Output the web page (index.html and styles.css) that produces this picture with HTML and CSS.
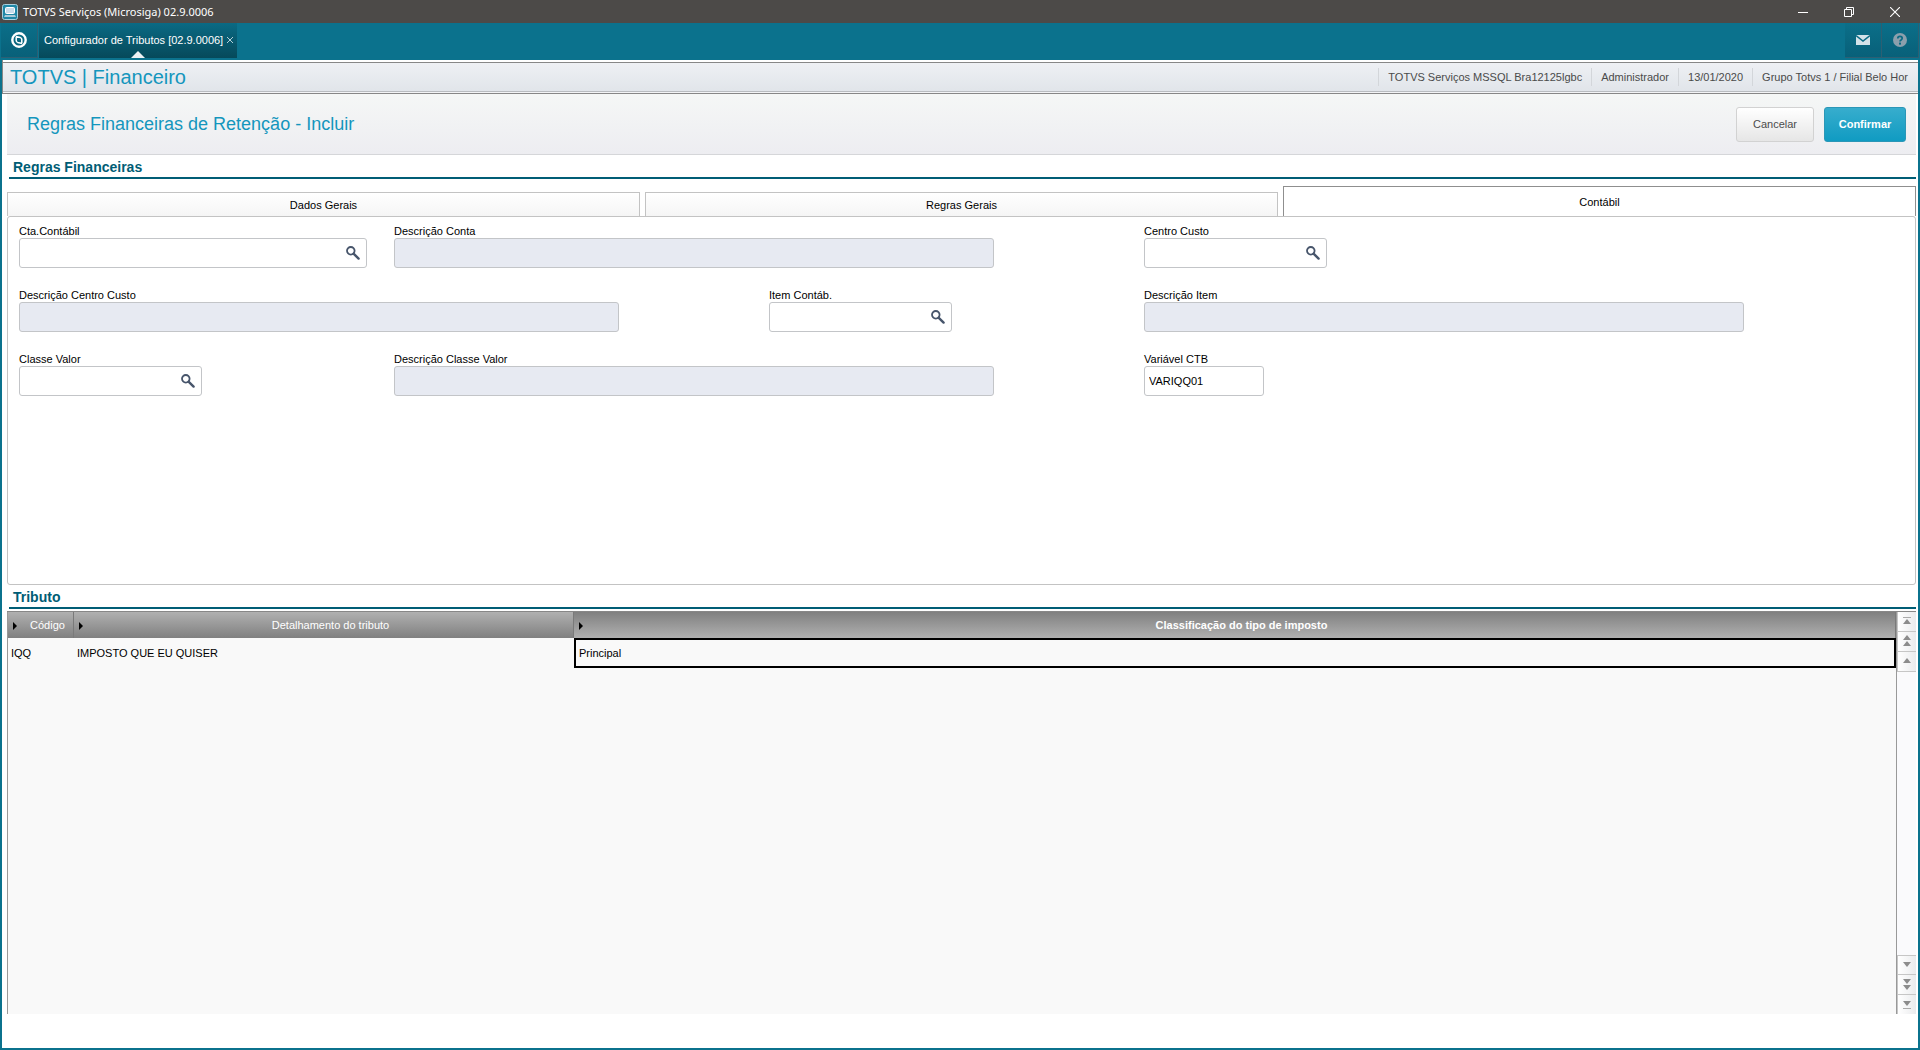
FILE: index.html
```html
<!DOCTYPE html>
<html lang="pt-BR">

<head>
  <meta charset="UTF-8">
  <meta name="viewport" content="width=device-width, initial-scale=1.0">
  <title>TOTVS Serviços (Microsiga) 02.9.0006</title>
  <link rel="stylesheet" href="styles.css">
</head>

<body>
  <svg class="sprite" aria-hidden="true">
    <symbol id="lupa" viewBox="0 0 14 14">
      <circle cx="4.8" cy="4.8" r="3.8" fill="none" stroke="#47556b" stroke-width="1.8"/>
      <path d="M7.8 7.8L12.6 12.6" stroke="#47556b" stroke-width="2.4" stroke-linecap="round"/>
    </symbol>
  </svg>

  <!-- barra da janela -->
  <header class="titlebar">
    <svg class="app-icon" width="16" height="16" viewBox="0 0 16 16">
      <rect x="0.5" y="0.5" width="15" height="15" rx="2" fill="#1f87a6" stroke="#a9cfdc"/>
      <rect x="3.5" y="3.5" width="9" height="6" rx="1" fill="#c9dcea" stroke="#fff"/>
      <path d="M3 11h10l1 2H2z" fill="#a9cbd8"/>
    </svg>
    <span class="window-title">TOTVS Serviços (Microsiga) 02.9.0006</span>
    <div class="window-buttons">
      <button type="button" aria-label="Minimizar"><svg width="10" height="10"><path d="M0 5.5H10" stroke="#fff"/></svg></button>
      <button type="button" aria-label="Restaurar"><svg width="10" height="10"><path d="M0.5 2.5h7v7h-7zM2.5 2.5v-2h7v7h-2" fill="none" stroke="#fff"/></svg></button>
      <button type="button" aria-label="Fechar"><svg width="10" height="10"><path d="M0 0L10 10M10 0L0 10" stroke="#fff" stroke-width="1.1"/></svg></button>
    </div>
  </header>

  <!-- abas do sistema -->
  <nav class="appbar">
    <button type="button" class="home" aria-label="Início">
      <svg width="16" height="16" viewBox="0 0 16 16">
        <circle cx="8" cy="8" r="6.7" fill="none" stroke="#fff" stroke-width="2.4"/>
        <path d="M4.8 4.6L9.4 5.6Q10.8 6 10.8 7.4V10.9M11.2 11.4L6.6 10.4Q5.2 10 5.2 8.6V5.1" fill="none" stroke="#fff" stroke-width="1.5"/>
      </svg>
    </button>
    <div class="app-tab">
      <a href="#">Configurador de Tributos [02.9.0006]</a>
      <button type="button" class="tab-close" aria-label="Fechar aba"><svg width="6" height="6"><path d="M0 0L6 6M6 0L0 6" stroke="#b5d0d8"/></svg></button>
    </div>
    <div class="app-actions">
      <button type="button" aria-label="Mensagens"><svg width="14" height="10" viewBox="0 0 14 10"><rect width="14" height="10" fill="#d3e2e9"/><path d="M0 0.5L7 6L14 0.5" fill="none" stroke="#0a6a84" stroke-width="1.4"/></svg></button>
      <button type="button" aria-label="Ajuda"><svg width="14" height="14" viewBox="0 0 14 14"><circle cx="7" cy="7" r="7" fill="#8b9fac"/><path d="M4.8 5.4Q4.8 3.4 7 3.4T9.2 5.3Q9.2 6.3 8.1 6.9Q7 7.5 7 8.6" fill="none" stroke="#0a6a84" stroke-width="1.7"/><rect x="6" y="9.6" width="2" height="2" fill="#0a6a84"/></svg></button>
    </div>
  </nav>

  <div class="module-bar">
    <h1>TOTVS | Financeiro</h1>
    <ul class="session">
      <li>TOTVS Serviços MSSQL Bra12125lgbc</li>
      <li>Administrador</li>
      <li>13/01/2020</li>
      <li>Grupo Totvs 1 / Filial Belo Hor</li>
    </ul>
  </div>

  <main>
    <div class="form-header">
      <h2>Regras Financeiras de Retenção - Incluir</h2>
      <div class="form-actions">
        <button type="button" class="btn">Cancelar</button>
        <button type="button" class="btn btn-primary">Confirmar</button>
      </div>
    </div>

    <h3 class="section-title">Regras Financeiras</h3>

    <div class="tabs" role="tablist">
      <button type="button" role="tab">Dados Gerais</button>
      <button type="button" role="tab">Regras Gerais</button>
      <button type="button" role="tab" class="active" aria-selected="true">Contábil</button>
    </div>

    <form class="panel">
      <div class="field">
        <label for="conta">Cta.Contábil</label>
        <div class="box box-md">
          <input type="text" id="conta">
          <button type="button" aria-label="Pesquisar"><svg width="14" height="14"><use href="#lupa"/></svg></button>
        </div>
      </div>
      <div class="field span2">
        <label for="desc-conta">Descrição Conta</label>
        <div class="box box-lg disabled"><input type="text" id="desc-conta" disabled></div>
      </div>
      <div class="field span2">
        <label for="custo">Centro Custo</label>
        <div class="box box-sm">
          <input type="text" id="custo">
          <button type="button" aria-label="Pesquisar"><svg width="14" height="14"><use href="#lupa"/></svg></button>
        </div>
      </div>

      <div class="field span2">
        <label for="desc-custo">Descrição Centro Custo</label>
        <div class="box box-lg disabled"><input type="text" id="desc-custo" disabled></div>
      </div>
      <div class="field">
        <label for="item">Item Contáb.</label>
        <div class="box box-sm">
          <input type="text" id="item">
          <button type="button" aria-label="Pesquisar"><svg width="14" height="14"><use href="#lupa"/></svg></button>
        </div>
      </div>
      <div class="field span2">
        <label for="desc-item">Descrição Item</label>
        <div class="box box-lg disabled"><input type="text" id="desc-item" disabled></div>
      </div>

      <div class="field">
        <label for="classe">Classe Valor</label>
        <div class="box box-sm">
          <input type="text" id="classe">
          <button type="button" aria-label="Pesquisar"><svg width="14" height="14"><use href="#lupa"/></svg></button>
        </div>
      </div>
      <div class="field span2">
        <label for="desc-classe">Descrição Classe Valor</label>
        <div class="box box-lg disabled"><input type="text" id="desc-classe" disabled></div>
      </div>
      <div class="field span2">
        <label for="variavel">Variável CTB</label>
        <div class="box box-xs"><input type="text" id="variavel" value="VARIQQ01"></div>
      </div>
    </form>

    <h3 class="section-title">Tributo</h3>

    <div class="grid">
      <div class="grid-body">
        <table>
          <colgroup>
            <col class="col-codigo">
            <col class="col-detalhe">
            <col>
          </colgroup>
          <thead>
            <tr>
              <th>Código</th>
              <th>Detalhamento do tributo</th>
              <th class="current">Classificação do tipo de imposto</th>
            </tr>
          </thead>
          <tbody>
            <tr>
              <td>IQQ</td>
              <td>IMPOSTO QUE EU QUISER</td>
              <td class="current">Principal</td>
            </tr>
          </tbody>
        </table>
      </div>
      <div class="scroller">
        <button type="button" aria-label="Primeiro"><svg width="8" height="8"><path d="M0 0.5H8" stroke="#aaa"/><path d="M4 2L8 7H0z" fill="#8c8c8c"/></svg></button>
        <button type="button" aria-label="Página anterior"><svg width="8" height="12"><path d="M4 0L8 5H0zM4 6L8 11H0z" fill="#8c8c8c"/></svg></button>
        <button type="button" aria-label="Anterior"><svg width="8" height="6"><path d="M4 0L8 5H0z" fill="#8c8c8c"/></svg></button>
        <span class="track"></span>
        <button type="button" aria-label="Próximo"><svg width="8" height="6"><path d="M0 0H8L4 5z" fill="#8c8c8c"/></svg></button>
        <button type="button" aria-label="Próxima página"><svg width="8" height="12"><path d="M0 0H8L4 5zM0 6H8L4 11z" fill="#8c8c8c"/></svg></button>
        <button type="button" aria-label="Último"><svg width="8" height="8"><path d="M0 0H8L4 5z" fill="#8c8c8c"/><path d="M0 7.5H8" stroke="#aaa"/></svg></button>
      </div>
    </div>
  </main>
</body>

</html>
```
FILE: styles.css
```css
* {
  box-sizing: border-box;
}

body {
  margin: 0;
  height: 100vh;
  display: flex;
  flex-direction: column;
  background-color: #0b728d;
  color: #000;
  font-family: "Liberation Sans", Arial, sans-serif;
  font-size: 11px;
}

h1, h2, h3, ul {
  margin: 0;
  padding: 0;
  font-weight: normal;
}

button, input {
  border: 0;
  margin: 0;
  padding: 0;
  background: none;
  color: inherit;
  font: inherit;
}

button svg {
  display: block;
}

.sprite {
  display: none;
}

/* barra da janela */
.titlebar {
  display: flex;
  align-items: center;
  height: 23px;
  padding: 0 2px;
  background-color: #4c4a48;
  color: #fff;
}

.window-title {
  margin-left: 5px;
  font-family: "Noto Sans", sans-serif;
  font-size: 11px;
}

.window-buttons {
  display: flex;
  margin-left: auto;
}

.window-buttons button {
  display: flex;
  align-items: center;
  justify-content: center;
  width: 46px;
  height: 20px;
}

/* abas do sistema */
.appbar {
  display: flex;
  height: 37px;
  padding: 0 1px 2px;
  color: #fff;
}

.home,
.app-actions button {
  display: flex;
  align-items: center;
  justify-content: center;
  width: 37px;
  border-right: 1px solid #2c5f73;
  border-bottom: 1px solid #2c5f73;
  background: linear-gradient(#0b6f89, #086079);
}

.app-tab {
  position: relative;
  display: flex;
  gap: 4px;
  margin-left: 1px;
  padding: 0 4px 0 5px;
  background: linear-gradient(#0a6a84, #06495a);
  line-height: 34px;
}

.app-tab::after {
  content: "";
  position: absolute;
  left: 50%;
  bottom: 0;
  margin-left: -7px;
  border: 7px solid transparent;
  border-top: 0;
  border-bottom-color: #eef1f4;
}

.app-tab a {
  color: #fff;
  text-decoration: none;
}

.tab-close {
  padding-bottom: 2px;
}

.app-actions {
  display: flex;
  margin-left: auto;
}

/* nome do módulo e sessão */
.module-bar {
  display: flex;
  justify-content: space-between;
  align-items: center;
  height: 34px;
  margin: 0 2px;
  border: 1px solid #878787;
  border-right: 0;
  border-top: 0;
  background: linear-gradient(#fff 2px, #878787 2px, #878787 3px, #eef0f4 3px, #e1e5ea 31px, #b9bcc0 31px, #b9bcc0 32px, #f3f4f6 32px);
}

.module-bar h1 {
  padding: 2px 0 0 7px;
  color: #1496bd;
  font-size: 20px;
}

.session {
  display: flex;
  padding-right: 1px;
  list-style: none;
  color: #4a4a4a;
}

.session li {
  padding: 0 9px;
  border-left: 1px solid #d3d6da;
  line-height: 18px;
}

main {
  flex: 1;
  display: flex;
  flex-direction: column;
  min-height: 0;
  margin: 0 2px 2px;
  padding: 0 2px 34px 5px;
  background-color: #fff;
}

.form-header {
  display: flex;
  justify-content: space-between;
  align-items: center;
  height: 61px;
  padding: 0 10px 0 20px;
  border-bottom: 1px solid #d5d6d9;
  background: linear-gradient(#f5f7f6, #ededf1);
}

.form-header h2 {
  color: #1496bd;
  font-size: 18px;
}

.form-actions {
  display: flex;
  gap: 10px;
}

.btn {
  width: 78px;
  height: 35px;
  border: 1px solid #d2d2d2;
  border-radius: 3px;
  background: linear-gradient(#fff, #e6e6e6);
  color: #4c4c4c;
}

.btn-primary {
  width: 82px;
  border-color: #2b97b7;
  background: linear-gradient(#37adcd, #109bc2);
  color: #fff;
  font-weight: bold;
}

.section-title {
  height: 24px;
  margin-left: 2px;
  padding-left: 4px;
  border-bottom: 2px solid #005d75;
  color: #005d75;
  font-size: 14px;
  font-weight: bold;
  line-height: 24px;
}

/* pastas do formulário */
.tabs {
  display: flex;
  align-items: flex-end;
  gap: 5px;
  height: 30px;
  margin-top: 7px;
}

.tabs button {
  flex: 1;
  height: 24px;
  border: 1px solid #c3c3c3;
  border-bottom: 0;
  background: linear-gradient(#fff, #f5f5f5);
}

.tabs .active {
  height: 30px;
  border-color: #8f8f8f;
  background: #fff;
}

.panel {
  flex: 1 1 368px;
  display: grid;
  grid-template-columns: repeat(5, 1fr);
  grid-auto-rows: 64px;
  padding: 8px 21px 0 11px;
  border: 1px solid #c3c3c3;
  border-radius: 3px;
}

.span2 {
  grid-column: span 2;
}

.field label {
  display: block;
  line-height: 13px;
}

.box {
  display: flex;
  align-items: center;
  height: 30px;
  border: 1px solid #c3c5c8;
  border-radius: 3px;
}

.box input {
  flex: 1;
  min-width: 0;
  height: 100%;
  padding: 0 4px;
}

.box button {
  padding-right: 6px;
}

.box-xs {
  width: 120px;
}

.box-sm {
  width: 183px;
}

.box-md {
  width: 348px;
}

.box-lg {
  width: 80%;
}

.disabled {
  background-color: #e7eaf2;
}

/* grade de tributos */
.grid {
  flex: 1 1 403px;
  display: flex;
  margin-top: 2px;
  border-top: 1px solid #878787;
}

.grid-body {
  flex: 1;
  border-left: 1px solid #999;
  border-right: 1px solid #999;
  background-color: #f9f9f9;
}

.grid table {
  width: 100%;
  border-collapse: separate;
  border-spacing: 0;
  table-layout: fixed;
}

.col-codigo {
  width: 66px;
}

.col-detalhe {
  width: 500px;
}

.grid th {
  position: relative;
  height: 26px;
  padding: 1px 0 0 14px;
  border-right: 1px solid #7a7a7a;
  background: linear-gradient(#b0b0b0, #808080);
  color: #fff;
  font-weight: normal;
}

.grid th::before {
  content: "";
  position: absolute;
  left: 5px;
  top: 10px;
  border: 4px solid transparent;
  border-left-color: #000;
  border-right: 0;
}

.grid th.current {
  background: linear-gradient(#808080, #b0b0b0);
  font-weight: bold;
}

.grid td {
  height: 30px;
  padding: 0 3px;
}

.grid td.current {
  border: 2px solid #000;
}

.scroller {
  display: flex;
  flex-direction: column;
  width: 19px;
  background-color: #fafafc;
}

.scroller button {
  display: flex;
  align-items: center;
  justify-content: center;
  height: 20px;
  border: 1px solid #c6c6c6;
  border-width: 0 0 1px 1px;
  background: linear-gradient(to right, #fff, #eaebed);
}

.scroller .track + button {
  border-top-width: 1px;
}

.scroller button:last-child {
  height: 19px;
  border-bottom: 0;
}

.track {
  flex: 1;
}
```
